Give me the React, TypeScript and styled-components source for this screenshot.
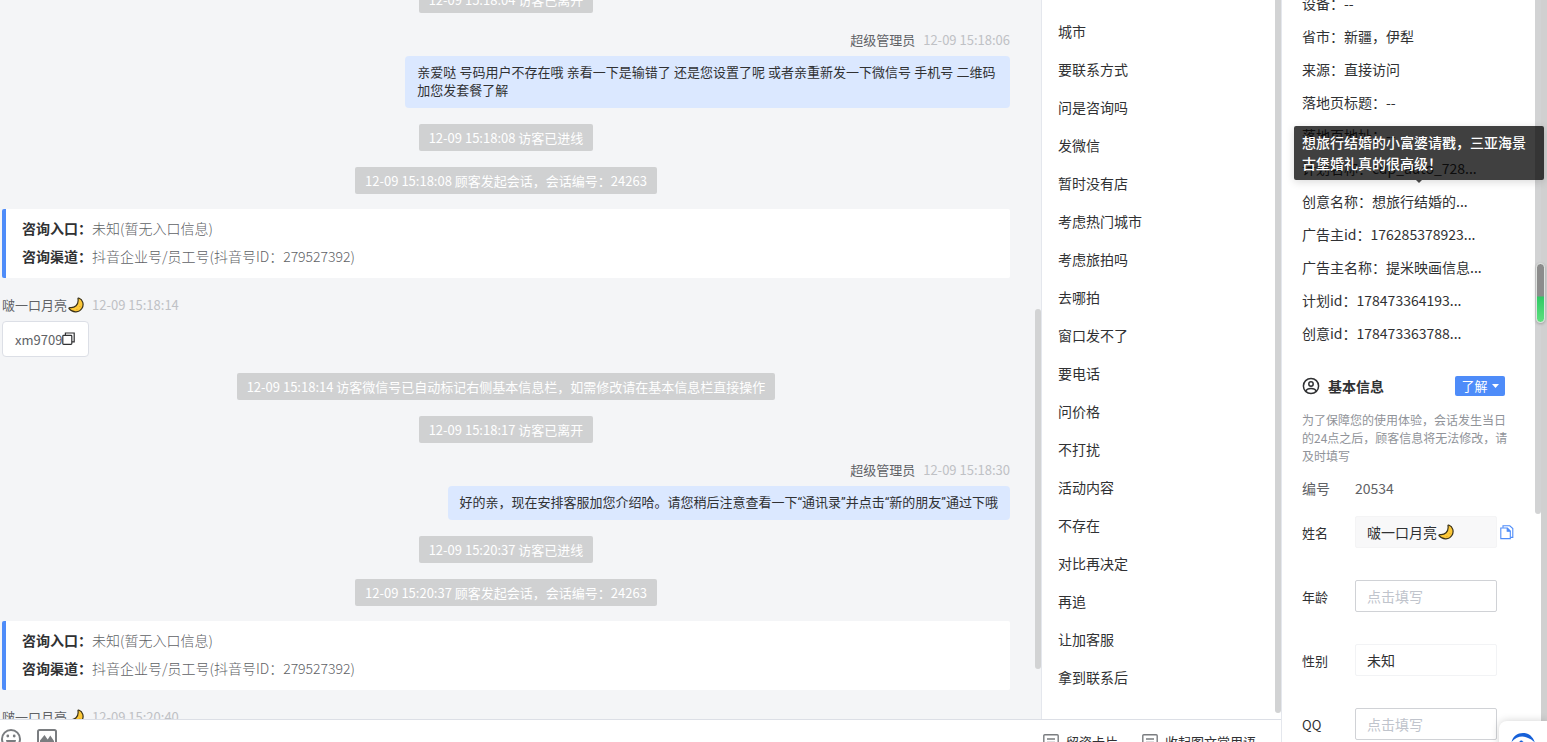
import React from 'react';
import styled, { createGlobalStyle } from 'styled-components';

const GlobalStyle = createGlobalStyle`
  * { box-sizing: border-box; }
  body {
    margin: 0;
    overflow: hidden;
    background: #fff;
    color: #303133;
    font-family: "Noto Sans CJK SC", "Open Sans", sans-serif;
    font-size: 14px;
  }
  button, input, select { font: inherit; color: inherit; }
  dl, dd, ul, p, h2 { margin: 0; padding: 0; }
`;

const Page = styled.div`
  display: grid;
  grid-template-columns: minmax(0, 1fr) 266px;
  height: 100vh;
  overflow: hidden;
`;

const Workspace = styled.main`
  display: grid;
  grid-template-columns: minmax(0, 1fr) 240px;
  grid-template-rows: minmax(0, 1fr) 23px;
  min-height: 0;
`;

const ScrollThumb = styled.span<{ $top?: string; $bottom: string; $right?: number }>`
  position: absolute;
  top: ${p => p.$top ?? '0'};
  bottom: ${p => p.$bottom};
  right: ${p => p.$right ?? 0}px;
  width: 6px;
  border-radius: ${p => (p.$top ? '3px' : '0 0 3px 3px')};
  background: #d2d3d4;
`;

const ChatPane = styled.section`
  position: relative;
  overflow: hidden;
  background: #f4f5f7;
`;

const MessageList = styled.div`
  display: flex;
  flex-direction: column;
  gap: 16px;
  margin-top: -14px;
  padding: 0 31px 0 2px;
`;

const Notice = styled.div`
  align-self: center;
  padding: 0 10px;
  border-radius: 2px;
  background: #d0d1d2;
  color: #fff;
  font-size: 13px;
  line-height: 27px;
  white-space: nowrap;
`;

const Message = styled.article<{ $own?: boolean }>`
  display: flex;
  flex-direction: column;
  align-items: ${p => (p.$own ? 'flex-end' : 'flex-start')};
  gap: 5px;
`;

const MessageHead = styled.header`
  display: flex;
  align-items: center;
  gap: 8px;
  color: #606266;
  font-size: 13px;
  line-height: 22px;
`;

const Nick = styled.span`
  display: inline-flex;
  align-items: center;
  gap: 1px;
`;

const Time = styled.time`
  color: #bfc1c5;
`;

const Bubble = styled.p`
  max-width: 60%;
  padding: 8px 12px;
  border-radius: 4px;
  background: #dbe8ff;
  font-family: Roboto, "Noto Sans CJK SC", sans-serif;
  font-size: 13px;
  line-height: 18px;
`;

const ContactBox = styled.div`
  display: flex;
  align-items: center;
  height: 36px;
  padding: 0 12px;
  border: 1px solid #dcdfe6;
  border-radius: 4px;
  background: #fff;
  color: #606266;
  font-size: 13px;
`;

const IconButton = styled.button`
  display: inline-flex;
  padding: 0;
  border: 0;
  background: none;
  cursor: pointer;
`;

const EntryCard = styled.dl`
  margin-top: -1px;
  padding: 5px 16px 8px;
  border-left: 4px solid #4e8cf9;
  border-radius: 2px;
  background: #fff;
  line-height: 28px;
`;

const EntryRow = styled.div`
  display: flex;
`;

const EntryLabel = styled.dt`
  font-weight: 700;
`;

const EntryValue = styled.dd`
  color: #606266;
  font-weight: 300;
`;

const QuickPane = styled.aside`
  position: relative;
  overflow: hidden;
  border-left: 1px solid #e4e7ed;
`;

const QuickList = styled.ul`
  padding: 12px 16px 0;
  list-style: none;
`;

const QuickItem = styled.li`
  line-height: 38px;
`;

const Toolbar = styled.footer`
  display: flex;
  grid-column: 1 / -1;
  align-items: flex-start;
  justify-content: space-between;
  overflow: hidden;
  border-top: 1px solid #dcdfe6;
  padding: 0 25px 0 1px;
`;

const ToolGroup = styled.div<{ $gap: number; $height: number }>`
  display: flex;
  flex-shrink: 0;
  align-items: center;
  gap: ${p => p.$gap}px;
  height: ${p => p.$height}px;
`;

const ToolButton = styled(IconButton)`
  align-items: center;
  gap: 7px;
  color: #303133;
  font-size: 13px;
`;

const InfoPane = styled.aside`
  position: relative;
  overflow: hidden;
  border-left: 1px solid #e4e7ed;
`;

const InfoBody = styled.div`
  margin-top: -13px;
  padding: 0 42px 0 20px;
`;

const Fact = styled.div`
  display: flex;
  line-height: 33px;
  white-space: nowrap;
`;

const SectionHead = styled.div`
  display: flex;
  align-items: center;
  gap: 8px;
  height: 20px;
  margin-top: 26px;
`;

const SectionTitle = styled.h2`
  flex: 1;
  font-size: 14px;
  line-height: 20px;
`;

const StageButton = styled.button`
  display: flex;
  align-items: center;
  justify-content: center;
  gap: 4px;
  width: 50px;
  height: 20px;
  padding: 0;
  border: 0;
  border-radius: 2px;
  background: #4e8cf9;
  color: #fff;
  font-size: 13px;
  line-height: 20px;
`;

const Hint = styled.p`
  margin-top: 15px;
  margin-right: -7px;
  color: #909399;
  font-size: 12px;
  line-height: 18px;
`;

const NumberRow = styled.div`
  display: flex;
  margin-top: 12px;
  color: #606266;
  line-height: 22px;
`;

const NumberLabel = styled.span`
  width: 53px;
`;

const Fields = styled.form`
  display: grid;
  gap: 32px;
  margin-top: 17px;
`;

const Field = styled.div`
  display: flex;
  align-items: center;
  height: 32px;
`;

const FieldLabel = styled.label`
  width: 53px;
  font-size: 13px;
`;

const fieldBox = `
  width: 142px;
  height: 32px;
  padding: 0 11px;
  border-radius: 2px;
  outline: none;
`;

const TextInput = styled.input`
  ${fieldBox}
  border: 1px solid #d0d2d6;
  background: #fff;
  &::placeholder { color: #c0c4cc; opacity: 1; }
`;

const GenderSelect = styled.select`
  ${fieldBox}
  border: 1px solid #f2f3f5;
  background: #fff;
  appearance: none;
`;

const NameBox = styled.div`
  ${fieldBox}
  display: flex;
  align-items: center;
  gap: 1px;
  background: #f8f8f9;
  border: 1px solid #f4f4f5;
`;

const NameInput = styled.input`
  width: 70px;
  padding: 0;
  border: 0;
  outline: none;
  background: transparent;
`;

const CopyName = styled(IconButton)`
  margin-left: 3px;
`;

const Tooltip = styled.div`
  position: absolute;
  top: 126px;
  left: 12px;
  width: 250px;
  padding: 6px 8px;
  border-radius: 2px;
  background: rgba(0, 0, 0, 0.75);
  box-shadow: 0 2px 8px rgba(0, 0, 0, 0.15);
  color: #fff;
  font-weight: 500;
  line-height: 21px;
  &::after {
    content: "";
    position: absolute;
    top: 100%;
    left: 50%;
    margin-left: -3px;
    border: 3px solid transparent;
    border-top-color: #444;
  }
`;

const PageScrollbar = styled.span`
  position: absolute;
  top: 0;
  right: 0;
  bottom: 0;
  width: 6px;
  background: #d0d0d0;
`;

const Meter = styled.span`
  position: absolute;
  top: 263px;
  right: 2px;
  width: 9px;
  height: 60px;
  border: 1px solid #dfe3e0;
  border-radius: 5px;
  background: linear-gradient(#8c8c8c 0 32px, #2fc965 33px, #5fe07f 100%);
  box-shadow: 0 1px 3px rgba(0, 0, 0, 0.25);
`;

const Assistant = styled.button`
  position: absolute;
  right: 0;
  bottom: -26px;
  display: flex;
  justify-content: center;
  width: 48px;
  height: 47px;
  padding: 12px 0 0;
  border: 0;
  border-radius: 8px 0 0 8px;
  background: #fff;
  box-shadow: 0 0 8px rgba(0, 0, 0, 0.18);
`;

const Moon = () => (
  <svg width="16" height="16" viewBox="0 0 16 16" aria-hidden="true">
    <path d="M10.7 1C15 2.6 16.2 7.6 14 11.2C11.4 15.6 5 16.3 1 11.7C0.8 11 1.2 10.6 1.9 10.6C6.5 11.2 11 8 10 1.8C9.9 1.2 10.2 0.9 10.7 1Z" fill="#fcc838" stroke="#3a3118" strokeWidth="1.2" />
    <path d="M11.6 9.2l.9.9M8.4 12l.8.8" stroke="#d99a1c" strokeWidth="1" />
  </svg>
);

const CopySquares = () => (
  <svg width="14" height="14" viewBox="0 0 14 14" fill="none" stroke="#303133" strokeWidth="1.2" aria-hidden="true">
    <rect x="0.8" y="3.4" width="9" height="9" rx="0.8" />
    <path d="M3.4 3.2V1h8.800v8.800h-2.200" />
  </svg>
);

const CopyPages = () => (
  <svg width="14" height="16" viewBox="0 0 14 16" fill="none" stroke="#4e8cf9" strokeWidth="1.1" aria-hidden="true">
    <path d="M0.800 4h6.600L10.300 7v7.600H0.800z" />
    <path d="M7.200 4.100v3.200h3" fill="#4e8cf9" />
    <path d="M3 3.700V1.800h6.800L12.800 4.600v8.800h-2.300" />
  </svg>
);

const Smile = () => (
  <svg width="20" height="20" viewBox="0 0 20 20" fill="none" stroke="#7a7d80" strokeWidth="2" aria-hidden="true">
    <circle cx="10" cy="10" r="9" />
    <path d="M5 11h10c-.4 3-2.200 4.700-5 4.700s-4.600-1.700-5-4.700z" fill="#7a7d80" stroke="none" />
    <circle cx="6.800" cy="7" r="1.400" fill="#7a7d80" stroke="none" />
    <circle cx="13.200" cy="7" r="1.400" fill="#7a7d80" stroke="none" />
  </svg>
);

const Picture = () => (
  <svg width="20" height="20" viewBox="0 0 20 20" aria-hidden="true">
    <rect x="1" y="1" width="18" height="17" rx="1.600" fill="none" stroke="#7a7d80" strokeWidth="2" />
    <path d="M3 16v-4.500l4.500-5.500 3.200 4.500 2.600-4L17 12v4z" fill="#7a7d80" />
  </svg>
);

const CardIcon = () => (
  <svg width="16" height="14" viewBox="0 0 16 14" fill="none" stroke="#7a7d80" strokeWidth="1.4" aria-hidden="true">
    <rect x="0.8" y="0.8" width="14.400" height="12.400" rx="1" />
    <path d="M4 5h8M4 8.500h8" />
  </svg>
);

const UserCircle = () => (
  <svg width="18" height="18" viewBox="0 0 18 18" fill="none" stroke="#303133" strokeWidth="1.500" aria-hidden="true">
    <circle cx="9" cy="9" r="7.600" />
    <circle cx="9" cy="7" r="2.200" />
    <path d="M3.800 14.300c.8-2 2.700-2.700 5.200-2.700s4.400.7 5.200 2.700" />
  </svg>
);

const Caret = () => (
  <svg width="7" height="4" viewBox="0 0 7 4" aria-hidden="true">
    <path d="M0 0h7L3.500 4z" fill="#fff" />
  </svg>
);

const Swirl = () => (
  <svg width="24" height="24" viewBox="0 0 24 24" aria-hidden="true">
    <path d="M0.500 9C2 3 6.500 0 12 0C17.500 0 22 3.500 23.800 9.500C21.500 7.200 19.500 6 17 5C12 2.500 6 3 0.500 9z" fill="#1660d8" />
    <path d="M6.500 11c.3-1.600 1.200-2.200 2.400-2.400c0-1.600 2.800-1.600 2.800 0c1.600.4 2.300 1.400 2.600 3z" fill="#1660d8" />
  </svg>
);

const quickReplies = [
  '城市', '要联系方式', '问是咨询吗', '发微信', '暂时没有店', '考虑热门城市',
  '考虑旅拍吗', '去哪拍', '窗口发不了', '要电话', '问价格', '不打扰',
  '活动内容', '不存在', '对比再决定', '再追', '让加客服', '拿到联系后',
];

const facts: [string, string][] = [
  ['设备', '--'],
  ['省市', '新疆，伊犁'],
  ['来源', '直接访问'],
  ['落地页标题', '--'],
  ['落地页地址', '--'],
  ['计划名称', 'cdp_auto_728...'],
  ['创意名称', '想旅行结婚的...'],
  ['广告主id', '176285378923...'],
  ['广告主名称', '提米映画信息...'],
  ['计划id', '178473364193...'],
  ['创意id', '178473363788...'],
];

function Entry() {
  return (
    <EntryCard>
      <EntryRow>
        <EntryLabel>咨询入口：</EntryLabel>
        <EntryValue>未知(暂无入口信息)</EntryValue>
      </EntryRow>
      <EntryRow>
        <EntryLabel>咨询渠道：</EntryLabel>
        <EntryValue>抖音企业号/员工号(抖音号ID：279527392)</EntryValue>
      </EntryRow>
    </EntryCard>
  );
}

function AgentMessage({ time, children }: { time: string; children: React.ReactNode }) {
  return (
    <Message $own>
      <MessageHead>
        <span>超级管理员</span>
        <Time>{time}</Time>
      </MessageHead>
      <Bubble>{children}</Bubble>
    </Message>
  );
}

function VisitorMessage({ time, children }: { time: string; children?: React.ReactNode }) {
  return (
    <Message>
      <MessageHead>
        <Nick>啵一口月亮<Moon /></Nick>
        <Time>{time}</Time>
      </MessageHead>
      {children}
    </Message>
  );
}

export default function App() {
  return (
    <>
      <GlobalStyle />
      <Page>
        <Workspace>
          <ChatPane>
            <MessageList>
              <Notice>12-09 15:18:04 访客已离开</Notice>
              <AgentMessage time="12-09 15:18:06">
                亲爱哒 号码用户不存在哦 亲看一下是输错了 还是您设置了呢 或者亲重新发一下微信号 手机号 二维码加您发套餐了解
              </AgentMessage>
              <Notice>12-09 15:18:08 访客已进线</Notice>
              <Notice>12-09 15:18:08 顾客发起会话，会话编号：24263</Notice>
              <Entry />
              <VisitorMessage time="12-09 15:18:14">
                <ContactBox>
                  xm9709
                  <IconButton aria-label="复制"><CopySquares /></IconButton>
                </ContactBox>
              </VisitorMessage>
              <Notice>12-09 15:18:14 访客微信号已自动标记右侧基本信息栏，如需修改请在基本信息栏直接操作</Notice>
              <Notice>12-09 15:18:17 访客已离开</Notice>
              <AgentMessage time="12-09 15:18:30">
                好的亲，现在安排客服加您介绍哈。请您稍后注意查看一下“通讯录”并点击“新的朋友”通过下哦
              </AgentMessage>
              <Notice>12-09 15:20:37 访客已进线</Notice>
              <Notice>12-09 15:20:37 顾客发起会话，会话编号：24263</Notice>
              <Entry />
              <VisitorMessage time="12-09 15:20:40" />
            </MessageList>
            <ScrollThumb $top="43%" $bottom="7%" />
          </ChatPane>

          <QuickPane>
            <QuickList>
              {quickReplies.map(text => <QuickItem key={text}>{text}</QuickItem>)}
            </QuickList>
            <ScrollThumb $bottom="6px" />
          </QuickPane>

          <Toolbar>
            <ToolGroup $gap={16} $height={38}>
              <IconButton aria-label="表情"><Smile /></IconButton>
              <IconButton aria-label="图片"><Picture /></IconButton>
            </ToolGroup>
            <ToolGroup $gap={24} $height={42}>
              <ToolButton><CardIcon />留资卡片</ToolButton>
              <ToolButton><CardIcon />收起图文常用语</ToolButton>
            </ToolGroup>
          </Toolbar>
        </Workspace>

        <InfoPane>
          <InfoBody>
            {facts.map(([label, value]) => (
              <Fact key={label}>
                <span>{label}：</span>
                <span>{value}</span>
              </Fact>
            ))}
            <SectionHead>
              <UserCircle />
              <SectionTitle>基本信息</SectionTitle>
              <StageButton>了解<Caret /></StageButton>
            </SectionHead>
            <Hint>为了保障您的使用体验，会话发生当日的24点之后，顾客信息将无法修改，请及时填写</Hint>
            <NumberRow>
              <NumberLabel>编号</NumberLabel>
              <span>20534</span>
            </NumberRow>
            <Fields>
              <Field>
                <FieldLabel htmlFor="name">姓名</FieldLabel>
                <NameBox>
                  <NameInput id="name" defaultValue="啵一口月亮" />
                  <Moon />
                </NameBox>
                <CopyName type="button" aria-label="复制姓名"><CopyPages /></CopyName>
              </Field>
              <Field>
                <FieldLabel htmlFor="age">年龄</FieldLabel>
                <TextInput id="age" placeholder="点击填写" />
              </Field>
              <Field>
                <FieldLabel htmlFor="gender">性别</FieldLabel>
                <GenderSelect id="gender"><option>未知</option></GenderSelect>
              </Field>
              <Field>
                <FieldLabel htmlFor="qq">QQ</FieldLabel>
                <TextInput id="qq" placeholder="点击填写" />
              </Field>
            </Fields>
          </InfoBody>
          <PageScrollbar />
          <ScrollThumb $bottom="228px" $right={6} />
          <Meter />
          <Tooltip role="tooltip">想旅行结婚的小富婆请戳，三亚海景古堡婚礼真的很高级！</Tooltip>
          <Assistant aria-label="助手"><Swirl /></Assistant>
        </InfoPane>
      </Page>
    </>
  );
}
